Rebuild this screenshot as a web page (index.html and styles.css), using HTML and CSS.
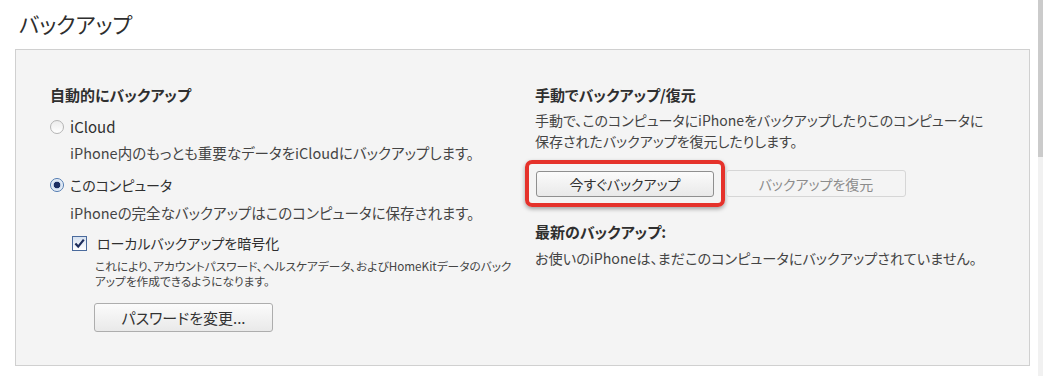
FILE: index.html
```html
<!DOCTYPE html>
<html lang="ja">
<head>
<meta charset="utf-8">
<link rel="stylesheet" href="styles.css">
</head>
<body>
<div class="window">
  <main class="content">
    <h1 class="page-title">バックアップ</h1>
    <section class="panel">
      <div class="col col-left">
        <h2 class="group-title">自動的にバックアップ</h2>
        <div class="option first">
          <span class="radio"></span>
          <span class="option-label">iCloud</span>
        </div>
        <p class="desc">iPhone内のもっとも重要なデータをiCloudにバックアップします。</p>
        <div class="option second">
          <span class="radio checked"></span>
          <span class="option-label">このコンピュータ</span>
        </div>
        <p class="desc desc-2">iPhoneの完全なバックアップはこのコンピュータに保存されます。</p>
        <div class="check-row">
          <span class="checkbox">
            <svg viewBox="0 0 13 13" width="13" height="13"><path d="M2.4 6.6 L5.2 9.6 L10.8 2.6" fill="none" stroke="#1d2d5c" stroke-width="2.2"/></svg>
          </span>
          <span class="option-label">ローカルバックアップを暗号化</span>
        </div>
        <p class="small">これにより、アカウントパスワード、ヘルスケアデータ、およびHomeKitデータのバック<br>アップを作成できるようになります。</p>
        <button class="btn btn-pass">パスワードを変更...</button>
      </div>
      <div class="col col-right">
        <h2 class="group-title">手動でバックアップ/復元</h2>
        <p class="desc-r">手動で、このコンピュータにiPhoneをバックアップしたりこのコンピュータに<br>保存されたバックアップを復元したりします。</p>
        <div class="btn-row">
          <span class="highlight"><button class="btn btn-now">今すぐバックアップ</button></span>
          <button class="btn btn-restore" disabled>バックアップを復元</button>
        </div>
        <h2 class="group-title latest">最新のバックアップ:</h2>
        <p class="desc-last">お使いのiPhoneは、まだこのコンピュータにバックアップされていません。</p>
      </div>
    </section>
  </main>
  <div class="scrollbar"><div class="thumb"></div></div>
</div>
</body>
</html>
```

FILE: styles.css
```css
html, body {
  margin: 0;
  padding: 0;
  background: #ffffff;
}
body {
  font-family: "Noto Sans CJK JP", "Noto Sans", sans-serif;
  font-feature-settings: "palt";
  color: #3b3b3b;
  width: 1043px;
  height: 376px;
  overflow: hidden;
}
.window {
  display: flex;
  height: 376px;
}
.content {
  flex: 1;
  padding: 9px 0 0 15px;
}
.page-title {
  margin: 0 0 10px 4px;
  font-size: 21.5px;
  line-height: 30px;
  height: 30px;
  font-weight: 400;
  color: #2e2e2e;
}
.panel {
  width: 1013px;
  height: 315px;
  border: 1px solid #d0d0d0;
  background: #f4f4f4;
  box-sizing: content-box;
  display: grid;
  grid-template-columns: 519px 1fr;
  padding: 0;
}
.col {
  padding-top: 35px;
}
.col-left {
  padding-left: 34px;
}
.group-title {
  margin: 0;
  font-size: 15px;
  line-height: 20px;
  height: 20px;
  font-weight: 700;
  color: #2f2f2f;
  white-space: nowrap;
}
.option {
  display: flex;
  align-items: center;
  height: 20px;
  margin-top: 12px;
}
.radio {
  width: 12px;
  height: 12px;
  border: 1px solid #b4b4b4;
  border-radius: 50%;
  background: linear-gradient(#ececec, #ffffff);
  margin-right: 6px;
  box-sizing: content-box;
}
.radio.checked {
  border-color: #4f79b0;
  background: radial-gradient(circle, #1c2f63 0, #1c2f63 3px, #c9d8ec 3.6px, #f4f8fc 6px);
}
.option-label {
  font-size: 14px;
  line-height: 20px;
  color: #2f2f2f;
  white-space: nowrap;
}
.option.first .option-label {
  font-size: 15px;
}
.desc {
  margin: 6px 0 0 20px;
  font-size: 14.5px;
  line-height: 20px;
  height: 20px;
  color: #444;
  white-space: nowrap;
}
.desc-2 {
  margin-top: 8px;
}
.check-row {
  display: flex;
  align-items: center;
  height: 20px;
  margin: 10px 0 0 22px;
}
.checkbox {
  width: 13px;
  height: 13px;
  border: 1px solid #4a6a9c;
  background: linear-gradient(#d6e1f0, #ffffff);
  margin-right: 10px;
  display: flex;
  align-items: center;
  justify-content: center;
  box-sizing: content-box;
}
.checkbox svg {
  display: block;
}
.small {
  margin: 5px 0 0 45px;
  font-size: 11.7px;
  line-height: 15px;
  color: #444;
  white-space: nowrap;
}
.btn {
  font-family: "Noto Sans CJK JP", "Noto Sans", sans-serif;
  font-feature-settings: "palt";
  font-size: 14px;
  color: #333;
  background: linear-gradient(#fbfbfb, #e9e9e9);
  border: 1px solid #adadad;
  border-radius: 3px;
  padding: 0;
  display: flex;
  align-items: center;
  justify-content: center;
}
.btn-pass {
  margin: 15px 0 0 44px;
  width: 179px;
  height: 29px;
  font-size: 15px;
}
.desc-r {
  margin: 5px 0 0 0;
  font-size: 14px;
  line-height: 21px;
  color: #444;
  white-space: nowrap;
}
.btn-row {
  display: flex;
  align-items: center;
  margin-top: 8px;
  height: 47px;
}
.highlight {
  display: flex;
  margin-left: -10px;
  padding: 7px 7px 6px 7px;
  border: 4px solid #e5322b;
  border-radius: 7px;
  box-shadow: 0 2px 4px rgba(0, 0, 0, 0.35);
}
.btn-now {
  width: 178px;
  height: 26px;
  border-color: #8f8f8f;
}
.btn-restore {
  margin-left: 1px;
  width: 180px;
  height: 27px;
  color: #8c8c8c;
  background: #f4f4f4;
  border-color: #d6d6d6;
}
.latest {
  margin-top: 15px;
}
.desc-last {
  margin: 6px 0 0 0;
  font-size: 14.2px;
  line-height: 20px;
  color: #444;
  white-space: nowrap;
}
.scrollbar {
  width: 5px;
  height: 376px;
  background: #f1f1f1;
}
.thumb {
  height: 157px;
  background: #cbcbcb;
}
```
